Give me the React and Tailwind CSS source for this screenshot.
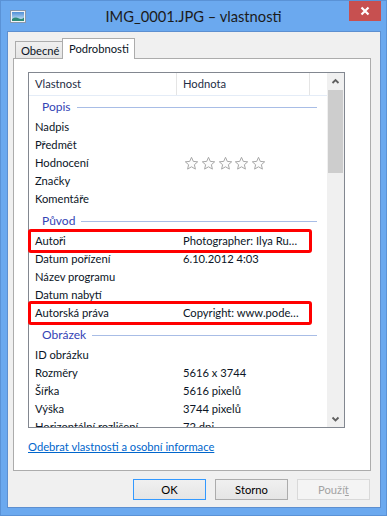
import React from "react";

function Star() {
  return (
    <svg width="15" height="15" viewBox="0 0 15 15" className="block">
      <path
        d="M7.5 1.3 L9.3 5.4 L13.7 5.8 L10.4 8.7 L11.4 13.1 L7.5 10.8 L3.6 13.1 L4.6 8.7 L1.3 5.8 L5.7 5.4 Z"
        fill="#fcfcfc"
        stroke="#a8a8a8"
        strokeWidth="1"
        strokeLinejoin="round"
      />
    </svg>
  );
}

function Group({ title, first }) {
  return (
    <div className={`shrink-0 flex h-[22px] items-center pl-[13px] pr-[10px] ${first ? "" : "mt-[2px]"}`}>
      <span className="text-[#3343b5] text-[12px]">{title}</span>
      <div className="ml-[6px] h-px flex-1 bg-[#a8bde6]" />
    </div>
  );
}

function Row({ label, value, boxed, stars }) {
  return (
    <div className="relative shrink-0 flex h-[18px] items-center whitespace-nowrap">
      <div className="w-[148px] pl-[6px] text-[#0b1526]">{label}</div>
      <div className="pl-[6px] text-[#0b1526]">
        {stars ? (
          <div className="flex gap-[1.8px] pl-[1px]">
            <Star />
            <Star />
            <Star />
            <Star />
            <Star />
          </div>
        ) : (
          value
        )}
      </div>
      {boxed && (
        <div className="absolute left-[-1px] right-[15px] top-[-3px] bottom-[-3px] border-[3px] border-[#ff0000] rounded-[3px]" />
      )}
    </div>
  );
}

function TitleIcon() {
  return (
    <svg width="16" height="14" viewBox="0 0 16 14" className="block">
      <defs>
        <linearGradient id="sky" x1="0" y1="0" x2="0" y2="1">
          <stop offset="0" stopColor="#4f8fd6" />
          <stop offset="1" stopColor="#d6ecfb" />
        </linearGradient>
      </defs>
      <rect x="0.5" y="0.5" width="15" height="12" fill="#f2f4f6" stroke="#8797ab" />
      <rect x="2" y="2" width="12" height="9" fill="url(#sky)" />
      <path d="M2 9 Q5.5 6.5 8.5 8.3 T14 7.5 V11 H2 Z" fill="#2e8b78" />
    </svg>
  );
}

function Chevron({ down }) {
  return (
    <svg width="17" height="17" viewBox="0 0 17 17" className="block shrink-0">
      <path
        d={down ? "M5.5 7.5 L8.5 10.5 L11.5 7.5" : "M5.5 10 L8.5 7 L11.5 10"}
        fill="none"
        stroke="#606060"
        strokeWidth="1.8"
      />
    </svg>
  );
}

export default function App() {
  return (
    <div className="w-[387px] h-[516px] overflow-hidden bg-[#6ba9ef] border border-[#5a92d6] flex flex-col font-[Lato,'Noto_Sans',sans-serif] text-[11.2px] leading-[16px]">
      {/* title bar */}
      <div className="h-[30px] shrink-0 grid grid-cols-[1fr_auto_1fr] items-start">
        <div className="pl-[9px] pt-[9px]">
          <TitleIcon />
        </div>
        <div className="pt-[4px] text-[14.7px] leading-[22px] text-[#1b1b1b] whitespace-nowrap">
          IMG_0001.JPG – vlastnosti
        </div>
        <div className="flex justify-end pr-[5px] -mt-[1px]">
          <div className="w-[32px] h-[21px] bg-[#c75050] flex items-center justify-center">
            <svg width="10" height="10" viewBox="0 0 10 10" className="block">
              <path d="M1.5 1.5 L8.5 8.5 M8.5 1.5 L1.5 8.5" stroke="#ffffff" strokeWidth="2.2" />
            </svg>
          </div>
        </div>
      </div>

      {/* client area */}
      <div className="ml-[6px] mr-[5px] mb-[7px] flex-1 border border-[#5d8fd0] bg-[#f0f0f0] flex flex-col">
        {/* tabs */}
        <div className="relative z-10 ml-[7px] mt-[6px] -mb-[1px] h-[21px] shrink-0 flex items-end">
          <div className="w-[47px] h-[17px] mb-[1px] border border-b-0 border-r-0 border-[#acacac] bg-gradient-to-b from-[#f0f0f0] to-[#e5e5e5] pl-[5px] text-[#0b1526] leading-[17px] whitespace-nowrap">
            Obecné
          </div>
          <div className="w-[73px] h-[21px] border border-b-0 border-[#acacac] bg-white pl-[6px] text-[#0b1526] leading-[19px] whitespace-nowrap">
            Podrobnosti
          </div>
        </div>

        {/* panel */}
        <div className="ml-[5px] w-[358px] h-[413px] shrink-0 bg-white border border-[#acacac] flex flex-col">
          <div className="ml-[14px] mt-[13px] w-[317px] h-[356px] shrink-0 border border-[#828790] flex">
            <div className="flex-1 flex flex-col overflow-y-clip">
              {/* header */}
              <div className="h-[23px] shrink-0 flex items-stretch border-b border-[#e4ecf7] text-[#1e2d45]">
                <div className="w-[147px] pl-[6px] flex items-center">Vlastnost</div>
                <div className="w-px bg-[#e5e5e5]" />
                <div className="w-[132px] pl-[6px] flex items-center">Hodnota</div>
                <div className="w-px bg-[#e5e5e5]" />
              </div>
              <Group title="Popis" first />
              <Row label="Nadpis" />
              <Row label="Předmět" />
              <Row label="Hodnocení" stars />
              <Row label="Značky" />
              <Row label="Komentáře" />
              <Group title="Původ" />
              <Row label="Autoři" value="Photographer: Ilya Ru…" boxed />
              <Row label="Datum pořízení" value="6.10.2012 4:03" />
              <Row label="Název programu" />
              <Row label="Datum nabytí" />
              <Row label="Autorská práva" value="Copyright: www.pode…" boxed />
              <Group title="Obrázek" />
              <Row label="ID obrázku" />
              <Row label="Rozměry" value="5616 x 3744" />
              <Row label="Šířka" value="5616 pixelů" />
              <Row label="Výška" value="3744 pixelů" />
              <Row label="Horizontální rozlišení" value="72 dpi" />
            </div>
            {/* scrollbar */}
            <div className="w-[17px] shrink-0 bg-[#f0f0f0] flex flex-col">
              <Chevron />
              <div className="mx-[1px] h-[83px] shrink-0 bg-[#cdcdcd]" />
              <div className="flex-1" />
              <Chevron down />
            </div>
          </div>
          <div className="ml-[14px] mt-[11px]">
            <span className="text-[#0066cc] underline">Odebrat vlastnosti a osobní informace</span>
          </div>
        </div>

        {/* buttons */}
        <div className="ml-[5px] w-[358px] mt-[8px] pr-[1px] shrink-0 flex justify-end gap-[9px]">
          <div className="w-[73px] h-[21px] border border-[#3399ff] bg-gradient-to-b from-[#f0f0f0] to-[#e5e5e5] flex items-center justify-center text-[#000]">
            OK
          </div>
          <div className="w-[73px] h-[21px] border border-[#acacac] bg-gradient-to-b from-[#f0f0f0] to-[#e5e5e5] flex items-center justify-center text-[#000]">
            Storno
          </div>
          <div className="w-[73px] h-[21px] border border-[#d9d9d9] bg-[#f4f4f4] flex items-center justify-center text-[#a3a3a3]">
            Použí<span className="underline">t</span>
          </div>
        </div>
      </div>
    </div>
  );
}
